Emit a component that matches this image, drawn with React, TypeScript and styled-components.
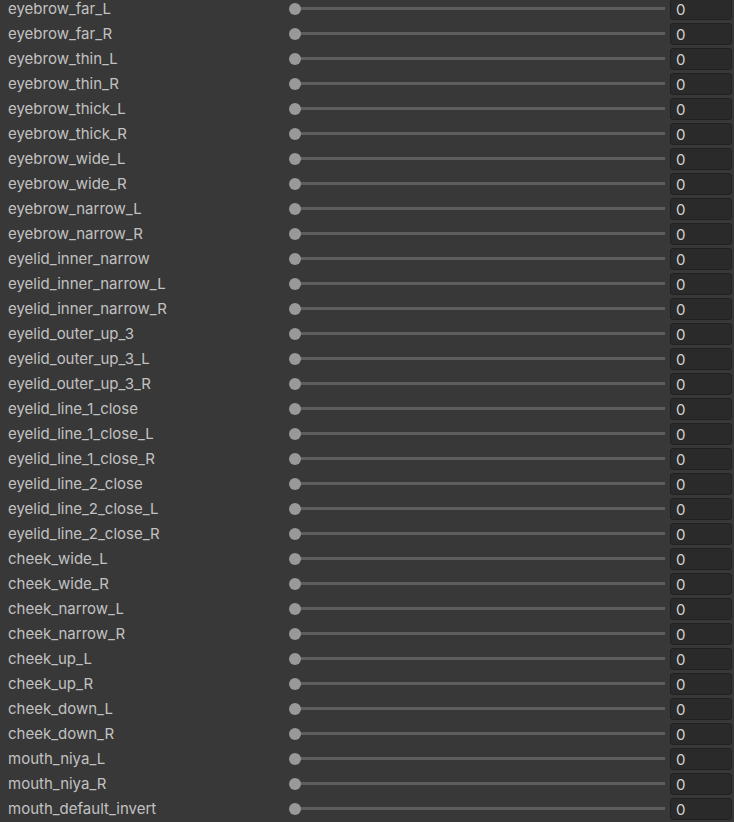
import React from 'react';
import styled, { createGlobalStyle } from 'styled-components';

const names = [
  'eyebrow_far_L',
  'eyebrow_far_R',
  'eyebrow_thin_L',
  'eyebrow_thin_R',
  'eyebrow_thick_L',
  'eyebrow_thick_R',
  'eyebrow_wide_L',
  'eyebrow_wide_R',
  'eyebrow_narrow_L',
  'eyebrow_narrow_R',
  'eyelid_inner_narrow',
  'eyelid_inner_narrow_L',
  'eyelid_inner_narrow_R',
  'eyelid_outer_up_3',
  'eyelid_outer_up_3_L',
  'eyelid_outer_up_3_R',
  'eyelid_line_1_close',
  'eyelid_line_1_close_L',
  'eyelid_line_1_close_R',
  'eyelid_line_2_close',
  'eyelid_line_2_close_L',
  'eyelid_line_2_close_R',
  'cheek_wide_L',
  'cheek_wide_R',
  'cheek_narrow_L',
  'cheek_narrow_R',
  'cheek_up_L',
  'cheek_up_R',
  'cheek_down_L',
  'cheek_down_R',
  'mouth_niya_L',
  'mouth_niya_R',
  'mouth_default_invert',
];

const GlobalStyle = createGlobalStyle`
  html, body {
    margin: 0;
    padding: 0;
    background: #383838;
    overflow: hidden;
  }
`;

type SliderProps = {
  value: number;
};

// value is 0..100, thumb sits at the left when 0
const Slider: React.FC<SliderProps> = ({ value }) => (
  <SliderTrack>
    <Thumb style={{ left: `${value}%` }} />
  </SliderTrack>
);

const App: React.FC = () => (
  <>
    <GlobalStyle />
    <Inspector>
      {names.map((name) => (
        <Row key={name}>
          <Label>{name}</Label>
          <Slider value={0} />
          <NumberField>0</NumberField>
        </Row>
      ))}
    </Inspector>
  </>
);

export default App;

const Inspector = styled.div`
  margin-top: -4px;
  width: 734px;
  font-family: Inter, 'Noto Sans', sans-serif;
  font-size: 15px;
  color: #c2c2c2;
`;

const Row = styled.div`
  display: grid;
  grid-template-columns: 276px 376px 62px;
  column-gap: 5px;
  align-items: center;
  height: 25px;
  padding-left: 8px;
`;

const Label = styled.span`
  white-space: nowrap;
  line-height: 25px;
`;

const SliderTrack = styled.div`
  position: relative;
  height: 3px;
  background: #5e5e5e;
  margin-left: 6px;
`;

const Thumb = styled.div`
  position: absolute;
  top: 50%;
  width: 12px;
  height: 12px;
  margin-left: -6px;
  margin-top: -6px;
  border-radius: 50%;
  background: #999999;
`;

const NumberField = styled.div`
  box-sizing: border-box;
  height: 22px;
  padding-left: 5px;
  line-height: 22px;
  background: #2a2a2a;
  border: 1px solid #212121;
  border-radius: 3px;
  color: #d2d2d2;
`;
